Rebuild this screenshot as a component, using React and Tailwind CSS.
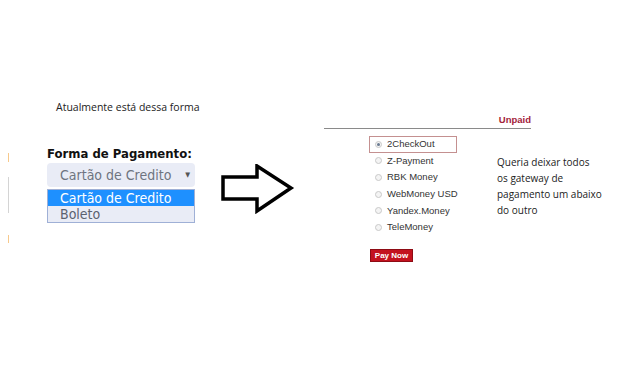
import React from 'react';

const gateways = ['2CheckOut', 'Z-Payment', 'RBK Money', 'WebMoney USD', 'Yandex.Money', 'TeleMoney'];

function Radio({ checked }) {
  return (
    <span className="shrink-0 w-[7px] h-[7px] rounded-full border border-[#c9c9c9] bg-[#f4f4f4] flex items-center justify-center">
      {checked && <span className="w-[3px] h-[3px] rounded-full bg-[#6a7a90]" />}
    </span>
  );
}

export default function App() {
  return (
    <div className="w-[640px] h-[392px] bg-white flex items-start overflow-hidden font-['Open_Sans',sans-serif]">
      {/* faded marks at the left edge */}
      <div className="ml-[7px] pt-[153px] flex flex-col items-center w-[2px]">
        <div className="w-[1px] h-[9px] bg-[#f7c98c]" />
        <div className="w-[1px] h-[36px] mt-[15px] bg-[#d4d4d4]" />
        <div className="w-[1px] h-[8px] mt-[22px] bg-[#f7c98c]" />
      </div>

      {/* current state */}
      <div className="ml-[38px] w-[148px] pt-[99px] flex flex-col">
        <p className="ml-[9px] whitespace-nowrap text-[10.5px] leading-[16px] text-[#222]">Atualmente está dessa forma</p>
        <p className="mt-[31px] whitespace-nowrap font-['DejaVu_Sans',sans-serif] font-bold text-[13px] leading-[16px] text-[#111] [font-stretch:condensed]">
          Forma de Pagamento:
        </p>
        <div className="mt-[1px] h-[24px] rounded-[4px] bg-[#e9ecf6] flex items-center pl-[13px] pr-[5px] font-['DejaVu_Sans',sans-serif] [font-stretch:condensed] text-[14px] text-[#6e7480]">
          <span className="flex-1 whitespace-nowrap">Cartão de Credito</span>
          <span className="text-[7px] text-[#555]">▼</span>
        </div>
        <div className="mt-[2px] border border-[#9fb0d6] bg-[#e9ecf6] font-['DejaVu_Sans',sans-serif] [font-stretch:condensed] text-[14px] leading-[16px]">
          <div className="bg-[#1e90ff] text-white pl-[12px] whitespace-nowrap">Cartão de Credito</div>
          <div className="text-[#5c6270] pl-[12px]">Boleto</div>
        </div>
      </div>

      {/* arrow */}
      <svg className="ml-[26px] mt-[164px]" width="74" height="50" viewBox="0 0 74 50">
        <path d="M2 13 H36 V2 L70 24 L36 47 V35 H2 Z" fill="white" stroke="black" strokeWidth="3.5" strokeLinejoin="miter" />
      </svg>

      {/* desired state */}
      <div className="ml-[29px] pt-[114px] w-[290px] flex flex-col">
        <div className="w-[207px] border-b border-[#8a8a8a] pb-[2px] flex justify-end">
          <span className="font-['Liberation_Sans',sans-serif] font-bold text-[9.5px] leading-[12px] text-[#a3233a]">Unpaid</span>
        </div>
        <div className="flex items-start mt-[7px]">
          <div className="ml-[45px] w-[88px] shrink-0 flex flex-col font-['Liberation_Sans',sans-serif] text-[9.5px] text-[#333]">
            {gateways.map((g, i) => (
              <div
                key={g}
                className={`h-[16.6px] flex items-center gap-[5px] pl-[5px] whitespace-nowrap ${i === 0 ? 'border border-[#c49090]' : 'border border-transparent'}`}
              >
                <Radio checked={i === 0} />
                <span>{g}</span>
              </div>
            ))}
            <button className="mt-[13px] ml-[1px] w-[43px] h-[13px] bg-[#c3121f] border border-[#8e0b14] text-white font-bold text-[8px] leading-[11px]">
              Pay Now
            </button>
          </div>
          <p className="ml-[40px] mt-[18px] whitespace-nowrap text-[10px] leading-[16px] text-[#222]">
            Queria deixar todos<br />os gateway de<br />pagamento um abaixo<br />do outro
          </p>
        </div>
      </div>
    </div>
  );
}
